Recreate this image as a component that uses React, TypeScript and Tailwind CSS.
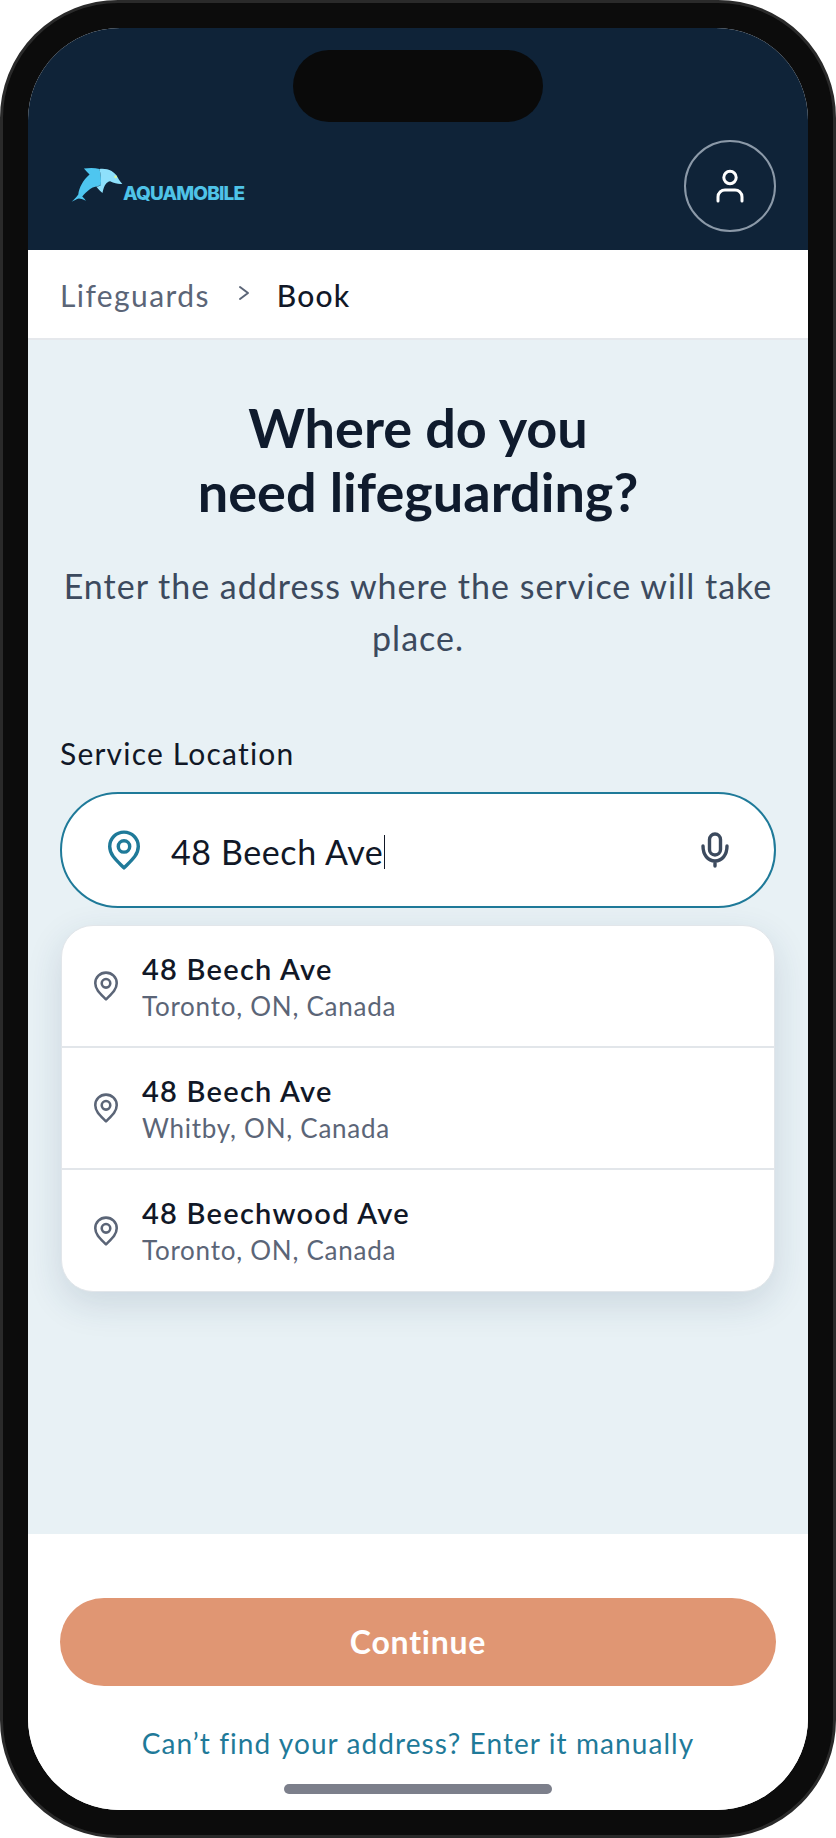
const Pin = ({ className }: { className: string }) => (
  <svg viewBox="0 0 24 28" fill="none" stroke="currentColor" strokeLinejoin="round" className={className}>
    <path strokeWidth="2.4" d="M12 26.5 C7 21.5 2 17.5 2 11.5 C2 5.8 6.5 1.5 12 1.5 C17.5 1.5 22 5.8 22 11.5 C22 17.5 17 21.5 12 26.5 Z" />
    <circle cx="12" cy="11.5" r="4" strokeWidth="2.4" />
  </svg>
);

const Dolphin = () => (
  <svg viewBox="15 15 160 113" className="w-[53px] h-[38px] shrink-0">
    <path fill="#4ec6f0" d="M20 122 C28 114 34 108 40 100 C42 82 54 56 74 40 C68 34 62 28 57 22 C72 19 90 19 104 23 C108 38 110 56 108 72 L94 76 C80 78 66 90 52 106 C56 110 60 114 63 119 C54 114 46 112 42 112 C34 114 28 118 20 122 Z" />
    <path fill="#8ee0fb" d="M104 23 C128 20 150 30 160 50 C163 56 168 62 173 68 C162 70 150 66 136 60 C126 62 118 70 113 96 C106 90 100 84 94 76 C100 76 104 74 108 72 C110 56 108 38 104 23 Z" />
    <circle cx="153" cy="47" r="4" fill="#dcf79c" />
  </svg>
);

const rows = [
  ["48 Beech Ave", "Toronto, ON, Canada"],
  ["48 Beech Ave", "Whitby, ON, Canada"],
  ["48 Beechwood Ave", "Toronto, ON, Canada"],
];

export default function App() {
  return (
    <div className="w-[836px] h-[1838px] bg-white font-['Lato',sans-serif]">
      <div className="relative w-full h-full rounded-[118px] bg-[#0c0c0c] border-[3px] border-[#2a2a2a] p-[25px]">
        <div className="relative w-full h-full rounded-[92px] overflow-hidden bg-white flex flex-col">
          <header className="h-[222px] shrink-0 bg-[#0f2338] flex items-end justify-between pl-[42px] pr-[32px] pb-[18px]">
            <div className="flex items-end mb-[28px]">
              <Dolphin />
              <span className="font-['Inter',sans-serif] font-extrabold text-[19px] leading-[17px] tracking-[-0.85px] text-[#4fc3e8] mb-[2px]">AQUAMOBILE</span>
            </div>
            <button className="w-[92px] h-[92px] rounded-full border-2 border-[#8b99a8] flex items-center justify-center">
              <svg viewBox="0 0 28 34" fill="none" stroke="white" strokeWidth="3" strokeLinecap="round" className="w-[28px] h-[34px]">
                <circle cx="14" cy="8.5" r="6.2" />
                <path d="M2 32 V28 C2 23.5 5.5 21 9 21 H19 C22.5 21 26 23.5 26 28 V32" />
              </svg>
            </button>
          </header>
          <nav className="h-[90px] shrink-0 bg-white border-b-2 border-[#e5e8ec] flex items-center pl-[32px] text-[30px] pt-[2px]">
            <span className="text-[#5b6577] tracking-[1.4px]">Lifeguards</span>
            <svg viewBox="0 0 12 16" fill="none" stroke="#5b6577" strokeWidth="2" strokeLinecap="round" strokeLinejoin="round" className="w-[12px] h-[16px] ml-[28px] mr-[27px] mb-[4px]">
              <path d="M2 2 L10 8 L2 14" />
            </svg>
            <span className="text-[#111827] font-medium tracking-[1.2px]">Book</span>
          </nav>
          <main className="flex-1 bg-[#e8f1f5] px-[32px] pt-[56px]">
            <h1 className="text-center font-bold text-[54px] leading-[64px] text-[#0f1b2d]">
              Where do you<br />need lifeguarding?
            </h1>
            <p className="mt-[36px] text-center text-[34px] leading-[52px] text-[#3c4a5e] tracking-[1px]">
              Enter the address where the service will take place.
            </p>
            <label className="block mt-[71px] text-[30px] leading-[36px] text-[#111827] tracking-[1.2px]">Service Location</label>
            <div className="mt-[21px] h-[116px] rounded-full bg-white border-2 border-[#1f7a99] flex items-center pl-[44px] pr-[45px]">
              <Pin className="w-[36px] h-[40px] text-[#1f7a99] shrink-0" />
              <div className="ml-[29px] pt-[3px] flex-1 text-[34px] text-[#111827] tracking-[0.6px] leading-[34px]">
                <span className="inline-block border-r border-[#111827] pr-[1px]">48 Beech Ave</span>
              </div>
              <svg viewBox="0 0 28 36" fill="none" stroke="#3c4a5e" strokeWidth="3.4" strokeLinecap="round" className="w-[28px] h-[36px] shrink-0">
                <rect x="8.5" y="2" width="11" height="21" rx="5.5" />
                <path d="M2 14 C2 23 7 29 14 29 C21 29 26 23 26 14 M14 29 V34" />
              </svg>
            </div>
            <ul className="mt-[17px] mx-[1px] rounded-[32px] bg-white border border-[#e2e6ea] shadow-[0_12px_36px_rgba(30,60,90,0.14)] overflow-hidden">
              {rows.map(([title, sub], i) => (
                <li key={i} className={`flex items-center pl-[30px] ${i < 2 ? "h-[122px] border-b-2 border-[#e2e6ea]" : "h-[121px]"}`}>
                  <Pin className="w-[26px] h-[30px] text-[#5b6577] shrink-0 ml-[1px]" />
                  <div className="ml-[23px] pt-[1px]">
                    <div className="text-[29px] leading-[38px] font-semibold text-[#111827] tracking-[1.25px]">{title}</div>
                    <div className="text-[26px] leading-[36px] text-[#5b6577] tracking-[0.75px]">{sub}</div>
                  </div>
                </li>
              ))}
            </ul>
          </main>
          <footer className="h-[276px] shrink-0 bg-white px-[32px] pt-[64px] flex flex-col">
            <button className="h-[88px] rounded-full bg-[#e09673] text-white font-bold text-[32px] tracking-[0.75px]">Continue</button>
            <a className="mt-[39px] text-center text-[28px] leading-[36px] text-[#1f7a99] tracking-[1.08px]">Can’t find your address? Enter it manually</a>
          </footer>
          <div className="absolute left-[256px] bottom-[16px] w-[268px] h-[10px] rounded-full bg-[#7c7f8b]" />
          <div className="absolute left-[265px] top-[22px] w-[250px] h-[72px] rounded-[36px] bg-[#0a0a0a]" />
        </div>
      </div>
    </div>
  );
}
